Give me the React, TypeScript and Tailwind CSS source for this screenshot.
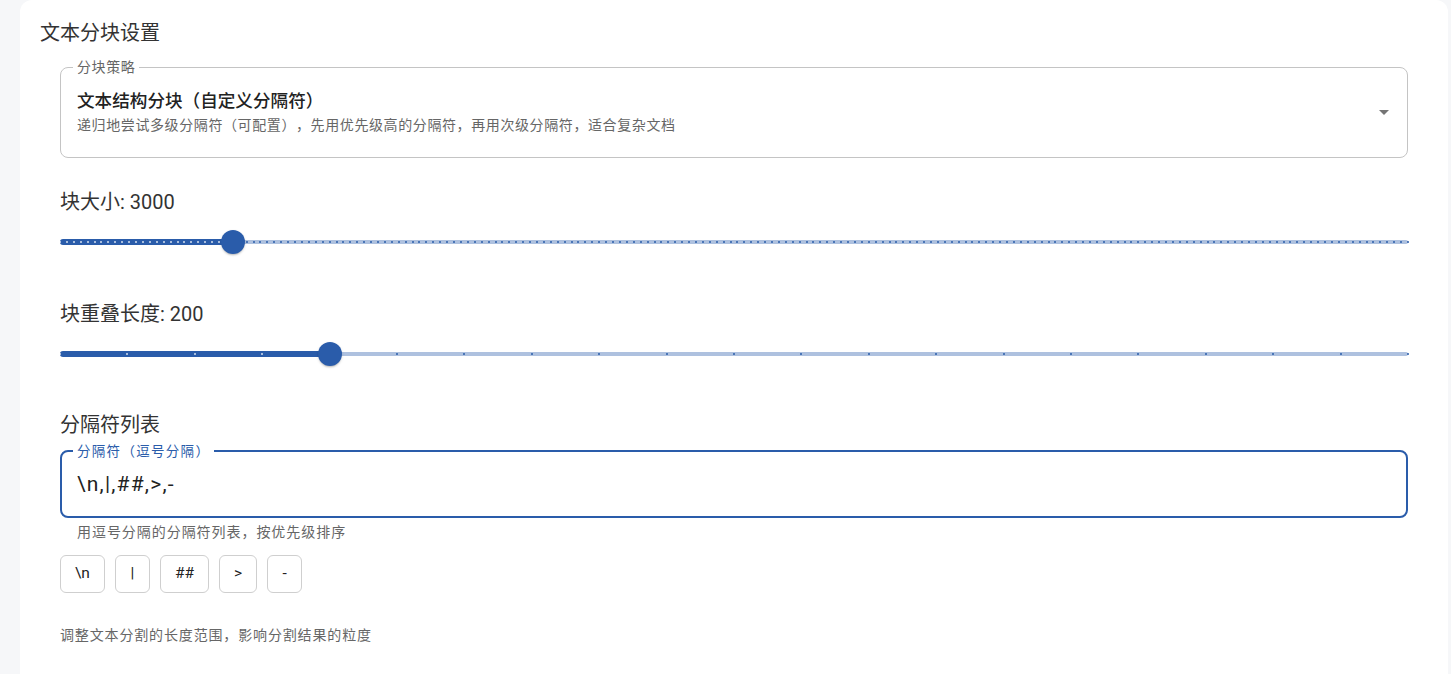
import React from "react";

function Slider({ value, min, max, step }: { value: number; min: number; max: number; step: number }) {
  const pct = ((value - min) / (max - min)) * 100;
  const count = Math.round((max - min) / step);
  const marks = Array.from({ length: count + 1 }, (_, i) => i);

  return (
    <div className="relative flex h-[28px] w-full items-center">
      {/* rail */}
      <div className="h-[4px] w-full rounded-full bg-[#2a5caa] opacity-[0.38]" />
      {/* track */}
      <div
        className="absolute left-0 top-[11px] h-[6px] rounded-full bg-[#2a5caa]"
        style={{ width: `${pct}%` }}
      />
      {marks.map((i) => {
        const p = (i / count) * 100;
        const active = p <= pct;
        return (
          <span
            key={i}
            className={
              active
                ? "absolute top-[13px] h-[2px] w-[2px] -translate-x-1/2 rounded-[1px] bg-white opacity-80"
                : "absolute top-[13px] h-[2px] w-[2px] -translate-x-1/2 rounded-[1px] bg-[#2a5caa]"
            }
            style={{ left: `${p}%` }}
          />
        );
      })}
      <span
        className="absolute top-[2px] h-6 w-6 -translate-x-1/2 rounded-full bg-[#2a5caa] shadow-[0_2px_2px_-1px_rgba(0,0,0,0.2),0_1px_3px_0_rgba(0,0,0,0.12)]"
        style={{ left: `${pct}%` }}
      />
    </div>
  );
}

export default function App() {
  const separators = ["\\n", "|", "##", ">", "-"];

  return (
    <div
      className="min-h-[674px] w-full bg-[#f6f7f9] pl-5 pr-[3px] text-[#333] [text-spacing-trim:space-all]"
      style={{ fontFamily: 'Roboto, "Noto Sans CJK SC", "Noto Sans", sans-serif' }}
    >
      <div className="min-h-[674px] rounded-t-xl bg-white px-5 pt-5">
        <h2 className="h-[26px] text-[20px] leading-[26px] font-normal text-[#333]">文本分块设置</h2>

        <div className="flex flex-col px-5">
          {/* strategy select */}
          <fieldset className="mt-[13px] rounded-lg border border-[#c4c4c4] pb-[22px] pl-4 pr-[11px]">
            <legend className="ml-[-4px] px-[4px] text-[14px] leading-[16px] tracking-[0.6px] text-[#666]">
              分块策略
            </legend>
            <div className="flex items-center justify-between pt-[14px]">
              <div className="flex flex-col gap-[2px]">
                <div className="text-[17.6px] leading-[24px] font-medium text-[#222]">
                  文本结构分块（自定义分隔符）
                </div>
                <div className="text-[14px] leading-[20px] tracking-[0.6px] text-[#666]">
                  递归地尝试多级分隔符（可配置），先用优先级高的分隔符，再用次级分隔符，适合复杂文档
                </div>
              </div>
              <svg className="h-6 w-6 text-[#757575]" viewBox="0 0 24 24" fill="currentColor">
                <path d="M7 10l5 5 5-5z" />
              </svg>
            </div>
          </fieldset>

          <div className="mt-[31px] h-[26px] text-[20px] leading-[26px]">块大小: 3000</div>
          <div className="mt-[13px]">
            <Slider value={3000} min={500} max={20000} step={100} />
          </div>

          <div className="mt-[45px] h-[26px] text-[20px] leading-[26px]">块重叠长度: 200</div>
          <div className="mt-[13px]">
            <Slider value={200} min={0} max={1000} step={50} />
          </div>

          <div className="mt-[44px] h-[26px] text-[20px] leading-[26px]">分隔符列表</div>

          {/* separators text field */}
          <fieldset className="mt-[5px] rounded-lg border-2 border-[#2a5caa] pb-[18px] pl-[15px]">
            <legend className="ml-[-4px] px-[4px] text-[13.5px] leading-[16px] tracking-[1.3px] text-[#2a5caa]">
              分隔符（逗号分隔）
            </legend>
            <div className="pt-[11px] text-[21px] leading-[28px] tracking-[1.2px] text-[#222]">
              {"\\n,|,##,>,-"}
            </div>
          </fieldset>
          <div className="mt-[4px] pl-[17px] text-[14px] leading-[20px] tracking-[0.95px] text-[#666]">
            用逗号分隔的分隔符列表，按优先级排序
          </div>

          <div className="mt-[13px] flex gap-[10px]">
            {separators.map((s) => (
              <button
                key={s}
                className="flex h-[38px] min-w-[35px] items-center justify-center rounded-md border border-[#cfcfcf] bg-white px-[14px] text-[15.5px] text-[#222]"
              >
                {s}
              </button>
            ))}
          </div>

          <div className="mt-[32px] text-[14px] leading-[20px] tracking-[0.85px] text-[#666]">
            调整文本分割的长度范围，影响分割结果的粒度
          </div>
        </div>
      </div>
    </div>
  );
}
